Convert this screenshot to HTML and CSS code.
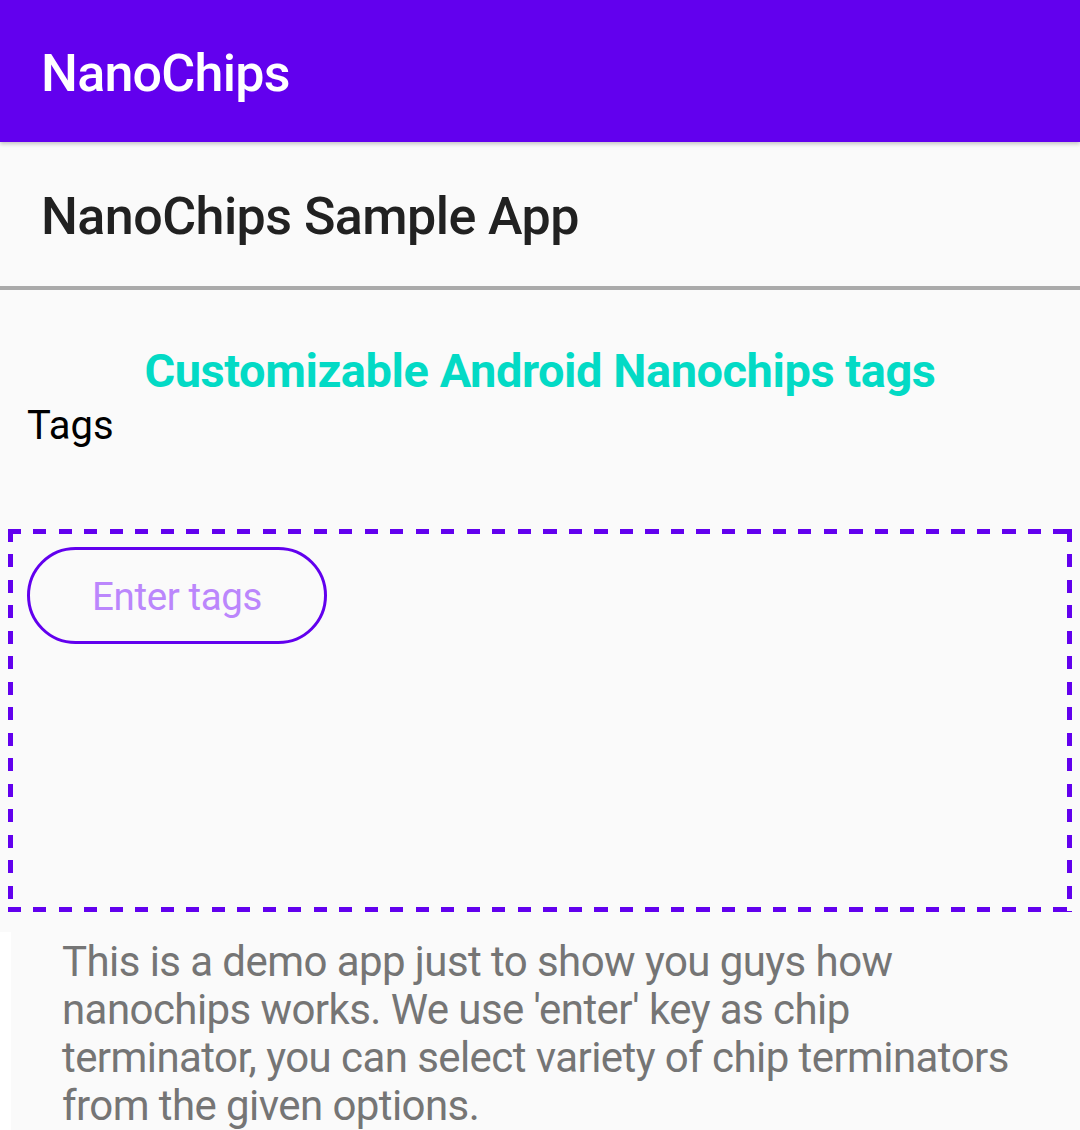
FILE: index.html
```html
<!DOCTYPE html>
<html lang="en">
<head>
<meta charset="utf-8">
<title>NanoChips</title>
<link rel="stylesheet" href="styles.css">
</head>
<body>
  <header class="appbar">
    <h1 class="appbar-title">NanoChips</h1>
  </header>
  <main class="content">
    <div class="subtitle-row">
      <h2 class="subtitle">NanoChips Sample App</h2>
    </div>
    <div class="divider"></div>
    <h3 class="heading">Customizable Android Nanochips tags</h3>
    <div class="label">Tags</div>
    <div class="tagbox">
      <div class="chip">Enter tags</div>
    </div>
  </main>
  <section class="description">
    <p class="desc-text">This is a demo app just to show you guys how nanochips works. We use 'enter' key as chip terminator, you can select variety of chip terminators from the given options.</p>
  </section>
</body>
</html>
```
FILE: styles.css
```css
html, body {
  margin: 0;
  padding: 0;
  background: #ffffff;
  font-family: Roboto, "Noto Sans", "Liberation Sans", sans-serif;
}

.appbar {
  position: relative;
  z-index: 2;
  box-sizing: border-box;
  height: 142px;
  padding: 48px 0 0 41px;
  background: #6200EE;
  box-shadow: 0 2px 4px rgba(0, 0, 0, 0.22);
}

.appbar-title {
  margin: 0;
  font-size: 52px;
  line-height: 52px;
  font-weight: 500;
  letter-spacing: -0.75px;
  color: #ffffff;
}

.content {
  background: #FAFAFA;
  padding-bottom: 20px;
}

.subtitle-row {
  box-sizing: border-box;
  height: 144px;
  padding: 49px 0 0 41px;
}

.subtitle {
  margin: 0;
  font-size: 52px;
  line-height: 52px;
  font-weight: 500;
  letter-spacing: -0.55px;
  color: #212121;
}

.divider {
  height: 4px;
  background: #AAAAAA;
}

.heading {
  margin: 57px 0 0 0;
  text-align: center;
  font-size: 47px;
  line-height: 47px;
  font-weight: 700;
  letter-spacing: -0.46px;
  color: #03DAC5;
}

.label {
  margin: 12px 0 0 27px;
  font-size: 40px;
  line-height: 40px;
  color: #000000;
}

.tagbox {
  box-sizing: border-box;
  margin: 83px 0 0 8px;
  width: 1064px;
  height: 383px;
  padding: 18px 0 0 19px;
  background:
    repeating-linear-gradient(90deg, #6200EE 0 13px, transparent 13px 25.5px) left top / 100% 5px no-repeat,
    repeating-linear-gradient(90deg, #6200EE 0 13px, transparent 13px 25.5px) left bottom / 100% 5px no-repeat,
    repeating-linear-gradient(180deg, #6200EE 0 13px, transparent 13px 25.5px) left top / 5px 100% no-repeat,
    repeating-linear-gradient(180deg, #6200EE 0 13px, transparent 13px 25.5px) right top / 5px 100% no-repeat;
}

.chip {
  box-sizing: border-box;
  width: 300px;
  height: 97px;
  border: 3px solid #6200EE;
  border-radius: 49px;
  display: flex;
  align-items: center;
  justify-content: center;
  padding-top: 2px;
  font-size: 38.5px;
  letter-spacing: -0.4px;
  color: #BB86FC;
}

.description {
  margin-left: 11px;
  background: #FAFAFA;
  padding: 6px 0 60px 51px;
}

.desc-text {
  margin: 0;
  width: 985px;
  font-size: 42px;
  line-height: 48px;
  letter-spacing: -0.57px;
  color: #757575;
}
```
